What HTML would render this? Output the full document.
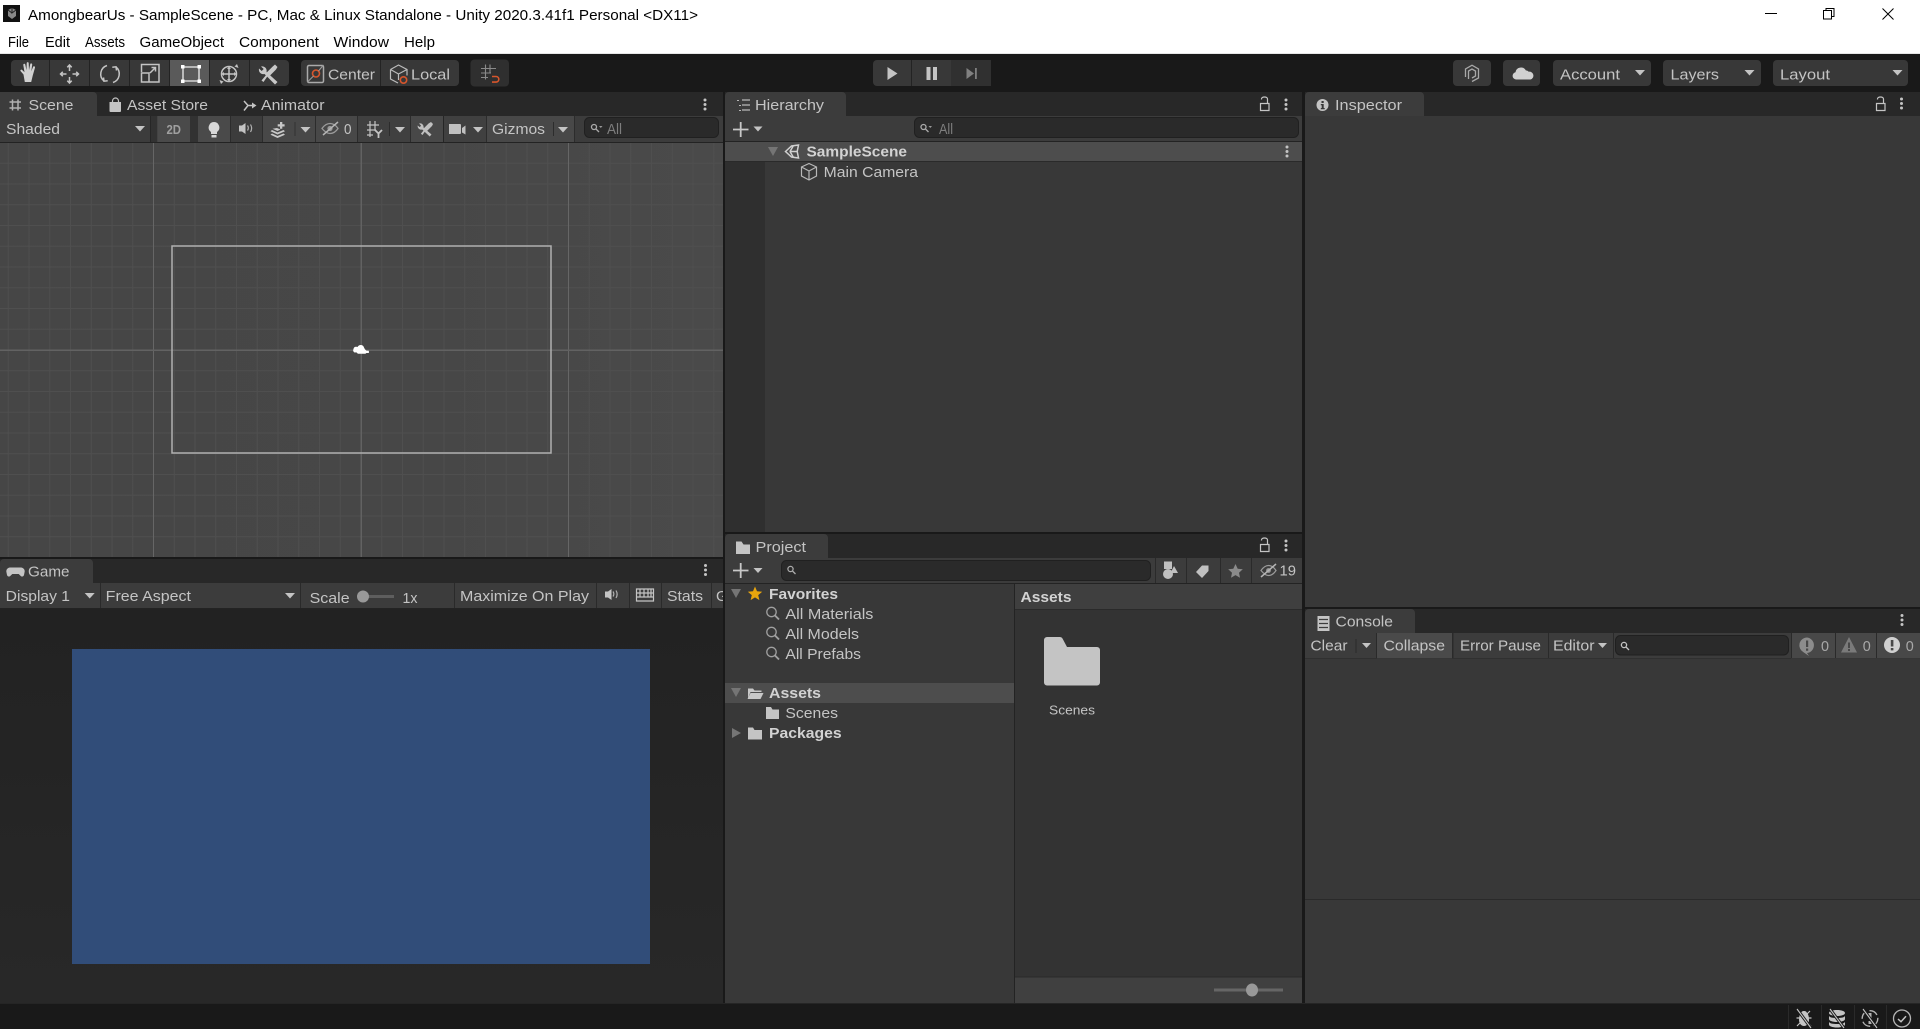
<!DOCTYPE html>
<html><head><meta charset="utf-8"><title>Unity</title>
<style>
html,body{margin:0;padding:0;width:1920px;height:1029px;overflow:hidden;background:#191919}
svg{display:block;position:absolute;left:0;top:0}
text{font-family:"Liberation Sans",sans-serif;font-size:15px;fill:#c4c4c4}
.k{fill:#000;font-size:15px}
.b{font-weight:bold;fill:#d2d2d2}
.d{fill:#7e7e7e}
.i{fill:#c4c4c4}
.s{fill:none;stroke:#c4c4c4;stroke-width:1.5}
.o{fill:none;stroke:#d8562c;stroke-width:1.6}
</style></head><body>
<svg width="1920" height="1029" viewBox="0 0 1920 1029" xmlns="http://www.w3.org/2000/svg">
<defs>
<pattern id="gx" x="153" y="0" width="20.75" height="10" patternUnits="userSpaceOnUse"><rect x="0" y="0" width="1" height="10" fill="#4f4f4f"/></pattern>
<pattern id="gy" x="0" y="142" width="10" height="20.75" patternUnits="userSpaceOnUse"><rect x="0" y="0" width="10" height="1" fill="#4f4f4f"/></pattern>
<linearGradient id="sg" x1="0" x2="1" y1="0" y2="0"><stop offset="0" stop-color="#464646"/><stop offset=".6" stop-color="#474747"/><stop offset="1" stop-color="#4a4a4a"/></linearGradient>
<linearGradient id="gg" x1="0" x2="0" y1="0" y2="1"><stop offset="0" stop-color="#222"/><stop offset="1" stop-color="#282828"/></linearGradient>
</defs>

<!-- title + menu -->
<rect width="1920" height="53" fill="#fff"/><rect y="53" width="1920" height="1" fill="#e6e6e6"/>
<rect x="3" y="5" width="17" height="17" fill="#111"/><path d="M8 10l4-2 4 2v6l-4 3-4-3z" fill="#888"/><path d="M12 8v5l4-3M12 13l-4-3" stroke="#222" fill="none"/>
<text class="k" x="28" y="20" textLength="670" lengthAdjust="spacingAndGlyphs">AmongbearUs - SampleScene - PC, Mac &amp; Linux Standalone - Unity 2020.3.41f1 Personal &lt;DX11&gt;</text>
<text class="k" x="8" y="47" textLength="21" lengthAdjust="spacingAndGlyphs">File</text>
<text class="k" x="45" y="47" textLength="25" lengthAdjust="spacingAndGlyphs">Edit</text>
<text class="k" x="85" y="47" textLength="40" lengthAdjust="spacingAndGlyphs">Assets</text>
<text class="k" x="139.5" y="47" textLength="84.5" lengthAdjust="spacingAndGlyphs">GameObject</text>
<text class="k" x="239" y="47" textLength="80" lengthAdjust="spacingAndGlyphs">Component</text>
<text class="k" x="333.5" y="47" textLength="55.5" lengthAdjust="spacingAndGlyphs">Window</text>
<text class="k" x="404" y="47" textLength="31" lengthAdjust="spacingAndGlyphs">Help</text>
<path d="M1765 13.500h12" stroke="#000" stroke-width="1" fill="none"/>
<path d="M1823.500 10.500h8v8.500h-8zM1826 10.500v-2h8v8h-2.500" stroke="#000" stroke-width="1" fill="none"/>
<path d="M1882.500 8.500l11 11M1893.500 8.500l-11 11" stroke="#000" stroke-width="1" fill="none"/>

<!-- main toolbar -->
<rect y="54" width="1920" height="38" fill="#191919"/>
<rect x="11" y="60" width="278" height="26" rx="4" fill="#383838"/>
<rect x="169" y="60" width="40" height="26" fill="#5a5a5a"/>
<rect x="49" y="60" width="1" height="26" fill="#232323"/><rect x="89" y="60" width="1" height="26" fill="#232323"/><rect x="129" y="60" width="1" height="26" fill="#232323"/><rect x="169" y="60" width="1" height="26" fill="#232323"/><rect x="209" y="60" width="1" height="26" fill="#232323"/><rect x="249" y="60" width="1" height="26" fill="#232323"/>
<!-- hand -->
<path fill="#d0d0d0" d="M23.500 74.500l-2.800-3.200c-.9-1 .5-2.200 1.500-1.300l2.300 2.300-1.200-7.300c-.2-1.400 1.700-1.800 2-.4l1.200 5.600.2-7c0-1.500 2-1.500 2 0l.3 7 1.200-6c.3-1.400 2.200-1 2 .4l-.9 6.600 1.800-4.300c.5-1.300 2.300-.6 1.900.7l-2.300 8.200-1.500 6.200h-6.400z"/>
<!-- move -->
<path class="s" d="M60.500 74h6M72.500 74h6M69.500 65v6M69.500 77v6M67.300 67.300l2.200-2.300 2.200 2.300M67.300 80.700l2.200 2.300 2.200-2.300M62.800 71.800l-2.300 2.200 2.300 2.200M76.200 71.800l2.300 2.200-2.300 2.200" stroke-width="1.200"/>
<!-- rotate -->
<path class="s" d="M107 65.500a9 9 0 0 0-3 15.500M103.500 77.500l.5 3.700 3.700-.4M113 82.500a9 9 0 0 0 3-15.500M116.500 70.500l-.5-3.700-3.700.4" stroke-width="1.300"/>
<!-- scale -->
<path class="s" d="M141.500 72v-7.500h17.500v17.500h-10.500M141.500 73h7.500v9h-7.500zM150 73l5.500-5.500M151.500 67.500h4v4" stroke-width="1.300"/>
<!-- rect -->
<path fill="none" stroke="#eee" stroke-width="1.300" d="M183 67h16v14h-16z"/><path fill="#fff" d="M181 65h3.500v3.500H181zM197.500 65h3.500v3.500h-3.500zM181 79.500h3.500V83H181zM197.500 79.500h3.500V83h-3.500z"/>
<!-- transform -->
<circle cx="229" cy="74" r="7.500" class="s" stroke-width="1.200"/><path class="s" stroke-width="1" d="M224 74h10M229 69v10"/><path class="i" d="M229 66.500l2 2.500h-4zM229 81.500l2-2.500h-4zM221.500 74l2.500-2v4zM236.500 74l-2.500-2v4zM237 64l1.500 4-4-1.500zM221 84l-1.500-4 4 1.500z"/>
<!-- tools -->
<path fill="#c8c8c8" d="M261 66.500a4.500 4.500 0 0 1 5.500 5.500l11 10-2.500 2.500-10.500-10.500a4.500 4.500 0 0 1-5.500-5.500l2.700 2.500 2-2z"/><path fill="#c8c8c8" d="M275 64.500l2.500 2.500-1.500 2.500-7 7-1-1-4.500 6.500-2-1.500 5-6-.8-1 7-7z"/>
<!-- center/local -->
<rect x="301" y="60" width="158" height="26" rx="4" fill="#383838"/><rect x="380" y="60" width="1" height="26" fill="#232323"/>
<rect x="307.500" y="65.500" width="16" height="17" rx="1.500" class="s" stroke-width="1.200" style="stroke:#aaa"/><circle cx="316" cy="73.500" r="3.500" class="o"/><path d="M307.500 82l6-6M318.500 71l5-6" stroke="#999" stroke-width="1.100"/>
<text x="328" y="79.500" textLength="47" lengthAdjust="spacingAndGlyphs">Center</text>
<path fill="none" stroke="#bbb" stroke-width="1.200" d="M390.500 69.500l8-4.500 8.500 4.500v6M390.500 69.500v9.500l7.500 4M390.500 69.500l8 4.500 8.500-4.500M398.500 74v6"/><circle cx="403.500" cy="80" r="3.200" class="o"/>
<text x="411" y="79.500" textLength="39" lengthAdjust="spacingAndGlyphs">Local</text>
<!-- snap -->
<rect x="470.500" y="59.500" width="38.500" height="27" rx="4" fill="#2f2f2f"/>
<path stroke="#8a8a8a" stroke-width="1.100" fill="none" d="M481 68.500h15M481 73h10M481 77.500h7M485.500 64.500v15M490 64.500v8"/>
<path class="o" stroke-width="2" d="M492 76.500h4a2.800 2.800 0 0 1 0 5.600h-4" fill="none"/>
<!-- play -->
<rect x="873" y="60" width="118" height="26" rx="4" fill="#383838"/><rect x="911" y="60" width="1" height="26" fill="#232323"/><rect x="951" y="60" width="40" height="26" fill="#303030"/>
<path fill="#c4c4c4" d="M887.500 67l10 6.500-10 6.500zM926.500 67h4v13h-4zM933 67h4v13h-4z"/>
<path fill="#808080" d="M966.500 68l7.500 5.500-7.500 5.500zM975 68h1.800v11H975z"/>
<!-- right toolbar -->
<rect x="1453" y="60" width="38" height="26" rx="4" fill="#383838"/>
<path fill="none" stroke="#a8a8a8" stroke-width="1.300" d="M1465.500 77v-8l6.500-3.800 6.500 3.800v9l-6.500 3.500M1468.500 79v-8l3.500-2 3.500 2v5l-3.500 2"/>
<rect x="1503" y="60" width="37" height="26" rx="4" fill="#383838"/>
<path fill="#d0d0d0" d="M1516 79.500a3.700 3.700 0 0 1-.5-7.300 5.500 5.500 0 0 1 10.300-1.800 4 4 0 0 1 3 1.300 4 4 0 0 1 1.700 7.800z"/>
<rect x="1553" y="60" width="98" height="26" rx="4" fill="#383838"/><rect x="1663" y="60" width="98" height="26" rx="4" fill="#383838"/><rect x="1773" y="60" width="135" height="26" rx="4" fill="#383838"/>
<text x="1560" y="79.500" textLength="60" lengthAdjust="spacingAndGlyphs">Account</text>
<text x="1670.500" y="79.500" textLength="48.500" lengthAdjust="spacingAndGlyphs">Layers</text>
<text x="1780" y="79.500" textLength="50" lengthAdjust="spacingAndGlyphs">Layout</text>
<path class="i" d="M1635 70h10l-5 5.500zM1744.500 70h10l-5 5.500zM1892.500 70h10l-5 5.500z"/>

<!-- Scene panel -->
<rect y="92" width="723" height="24" fill="#282828"/>
<path d="M0 116V92h93a4 4 0 0 1 4 4v20z" fill="#3c3c3c"/>
<path class="s" stroke-width="1.200" style="stroke:#b0b0b0" d="M9.500 102h11.500M9.500 108h11.500M12.500 99.500v11M18 99.500v11"/>
<text x="28.500" y="110" textLength="45" lengthAdjust="spacingAndGlyphs">Scene</text>
<path class="i" d="M109.500 102h11.500v9a1 1 0 0 1-1 1h-9.500a1 1 0 0 1-1-1z"/><path fill="none" stroke="#c4c4c4" stroke-width="1.200" d="M112.500 102v-1a3 3 0 0 1 6 0v1"/>
<text x="127" y="110" textLength="81" lengthAdjust="spacingAndGlyphs">Asset Store</text>
<path class="s" d="M244 101l4 4.500h7M244 110.500l4-5" stroke-width="1.400"/><path class="i" d="M252 102.500l4.500 3-4.500 3z"/>
<text x="261" y="110" textLength="63.500" lengthAdjust="spacingAndGlyphs">Animator</text>
<circle cx="705" cy="100" r="1.500" fill="#c4c4c4"/><circle cx="705" cy="104.500" r="1.500" fill="#c4c4c4"/><circle cx="705" cy="109" r="1.500" fill="#c4c4c4"/>

<rect y="116" width="723" height="26" fill="#3c3c3c"/>
<rect y="142" width="723" height="1" fill="#232323"/>
<rect x="150" y="116" width="7" height="26" fill="#323232"/><rect x="150" y="116" width="1" height="26" fill="#262626"/>
<rect x="157.500" y="116" width="32.500" height="26" fill="#4a4a4a"/><rect x="190" y="116" width="8" height="26" fill="#323232"/>
<rect x="198" y="116" width="32" height="26" fill="#4a4a4a"/><rect x="230" y="116" width="1" height="26" fill="#2c2c2c"/><rect x="262" y="116" width="1" height="26" fill="#2c2c2c"/>
<rect x="263" y="116" width="52" height="26" fill="#484848"/><rect x="315" y="116" width="1" height="26" fill="#2c2c2c"/>
<rect x="316" y="116" width="41" height="26" fill="#484848"/><rect x="357" y="116" width="1" height="26" fill="#2c2c2c"/>
<rect x="358" y="116" width="52" height="26" fill="#404040"/><rect x="410" y="116" width="1" height="26" fill="#2c2c2c"/>
<rect x="411" y="116" width="32" height="26" fill="#484848"/><rect x="443" y="116" width="1" height="26" fill="#262626"/>
<rect x="444" y="116" width="42" height="26" fill="#404040"/><rect x="486" y="116" width="1" height="26" fill="#2c2c2c"/>
<rect x="487" y="116" width="87" height="26" fill="#484848"/><rect x="574" y="116" width="1" height="26" fill="#2c2c2c"/>
<text x="6" y="134" textLength="54" lengthAdjust="spacingAndGlyphs">Shaded</text>
<path class="i" d="M135 126h10l-5 5.500z"/>
<text x="166.500" y="134" textLength="14.500" lengthAdjust="spacingAndGlyphs" font-weight="bold" style="fill:#a0a0a0;font-size:13px">2D</text>
<path fill="#d8d8d8" d="M214 122a5.500 5.500 0 0 1 3 10v2h-6v-2a5.500 5.500 0 0 1 3-10zM211.500 135h5v2.500h-5z"/>
<path fill="#c4c4c4" d="M239 125.500h3l3.500-2.500v11l-3.500-2.500h-3z"/><path fill="none" stroke="#b0b0b0" stroke-width="1.200" d="M247.500 125.500c1 1.500 1 3.500 0 5M250.500 124.500c1.500 2.500 1.500 5 0 7.500"/>
<path fill="#c8c8c8" d="M272 130l5.500 2.500 6-2.500 1.500 1.200-7.500 3.300-7-3.300zM272 133.500l5.500 2.500 6-2.500 1.500 1.200-7.500 3.300-7-3.300zM280 122h2.300v2.200h2.300v2.300h-2.300v2.200H280v-2.200h-2.300v-2.300h2.300zM277 128l3.500 1.500-3 1.500-5-2.300z"/>
<rect x="294.500" y="122" width="1" height="14" fill="#323232"/>
<path class="i" d="M300.500 127h10l-5 5.500z"/>
<path fill="none" stroke="#9a9a9a" stroke-width="1.300" d="M322 128.500c2.500-3.500 5-5 8-5s6 2 8 5c-2 3-5 5-8 5s-5.500-2-8-5z"/><circle cx="330" cy="128.500" r="2.600" fill="#9a9a9a"/><path stroke="#b4b4b4" stroke-width="1.500" d="M323 135l15-13"/>
<text x="344" y="134" textLength="7.500" lengthAdjust="spacingAndGlyphs">0</text>
<path fill="none" stroke="#c4c4c4" stroke-width="1.200" d="M367 125h12M367 130h9M367 135h6M370 121v16M375 121v9"/>
<path fill="none" stroke="#c4c4c4" stroke-width="1.800" d="M375 130l3.500 3.500 3.500-3.500M378.500 133.500v4.500"/>
<rect x="389" y="122" width="1" height="14" fill="#2c2c2c"/>
<path class="i" d="M395 127h10l-5 5.500z"/>
<path fill="#c0c0c0" d="M419 123.500a3.500 3.500 0 0 1 4.500 4l8 7-1.800 2-7.500-7a3.500 3.500 0 0 1-4.500-4l2 1.600 1.400-1.400zM431 122l2 2-1 2-5 5-1-1-3.500 5-1.600-1.200 3.600-4.600-.8-.8 5-5z"/>
<path fill="#c0c0c0" d="M450 123h11a1 1 0 0 1 1 1v8a1 1 0 0 1-1 1h-11zM463 127l3.500-2.500v9L463 131.500z" transform="translate(-1,1)"/>
<path class="i" d="M473 127h10l-5 5.500z"/>
<text x="492" y="134" textLength="53" lengthAdjust="spacingAndGlyphs">Gizmos</text>
<rect x="553" y="122" width="1" height="14" fill="#2c2c2c"/>
<path class="i" d="M558 127h10l-5 5.500z"/>
<rect x="584.500" y="117.500" width="134" height="20" rx="5" fill="#2a2a2a" stroke="#202020"/>
<circle cx="594" cy="127" r="2.500" fill="none" stroke="#aaa" stroke-width="1.300"/><path stroke="#aaa" stroke-width="1.300" d="M596 129l3 3"/><path fill="#999" d="M599 126h3.500l-1.700 2z"/>
<text x="607" y="134" textLength="15" lengthAdjust="spacingAndGlyphs" class="d">All</text>

<!-- scene view -->
<rect y="143" width="723" height="414" fill="url(#sg)"/>
<rect y="143" width="723" height="414" fill="url(#gx)"/>
<rect y="143" width="723" height="414" fill="url(#gy)"/>
<rect x="153" y="143" width="1" height="414" fill="#666"/><rect x="568" y="143" width="1" height="414" fill="#666"/>
<rect x="360.500" y="143" width="1.500" height="414" fill="#626262"/>
<rect y="349.500" width="723" height="1.500" fill="#626262"/>
<rect x="172" y="246" width="379" height="207" fill="none" stroke="#b0b0b0" stroke-width="1.500"/>
<path fill="#fff" d="M353.500 349a2.600 2.600 0 0 1 2.500-2.300l1.700.2a3.400 3.400 0 0 1 6.300 0.600l.9 1.800 1.500 1.300 2.500.2v2.200h-2.500l-1 .8h-7.500l-1.500-1.400-1.900.1a2.700 2.700 0 0 1-1-3.500z"/>

<!-- Game panel -->
<rect y="557" width="723" height="2" fill="#191919"/>
<rect y="559" width="723" height="24" fill="#282828"/>
<path d="M0 583V563a4 4 0 0 1 4-4h85a4 4 0 0 1 4 4v20z" fill="#3c3c3c"/>
<path class="i" d="M10 566.500h11a3.800 3.800 0 0 1 3.500 5l-.5 2.500c-.4 1.800-2.500 2-3.500.8l-1.800-1.800h-6.400l-1.800 1.800c-1 1.200-3.100 1-3.500-.8l-.5-2.500a3.800 3.800 0 0 1 3.500-5z" transform="translate(0,1)"/>
<text x="28" y="576.500" textLength="41.500" lengthAdjust="spacingAndGlyphs">Game</text>
<circle cx="705.500" cy="565.500" r="1.500" fill="#c4c4c4"/><circle cx="705.500" cy="570" r="1.500" fill="#c4c4c4"/><circle cx="705.500" cy="574.500" r="1.500" fill="#c4c4c4"/>
<rect y="583" width="723" height="25" fill="#3c3c3c"/>
<rect y="608" width="723" height="1" fill="#232323"/>
<rect x="100" y="583" width="1" height="25" fill="#2a2a2a"/><rect x="300" y="583" width="1" height="25" fill="#2a2a2a"/><rect x="454" y="583" width="1" height="25" fill="#2a2a2a"/><rect x="596" y="583" width="1" height="25" fill="#2a2a2a"/><rect x="629" y="583" width="1" height="25" fill="#2a2a2a"/><rect x="661" y="583" width="1" height="25" fill="#2a2a2a"/><rect x="711" y="583" width="1" height="25" fill="#2a2a2a"/>
<text x="5.700" y="601" textLength="64.300" lengthAdjust="spacingAndGlyphs">Display 1</text>
<path class="i" d="M84.700 593h10l-5 5.500z"/>
<text x="105.700" y="601" textLength="85.300" lengthAdjust="spacingAndGlyphs">Free Aspect</text>
<path class="i" d="M285 593h10l-5 5.500z"/>
<text x="309.600" y="603" textLength="40" lengthAdjust="spacingAndGlyphs">Scale</text>
<rect x="365" y="595" width="29" height="3" fill="#5e5e5e"/><circle cx="363" cy="596.500" r="6" fill="#999"/>
<text x="402.500" y="603" textLength="15" lengthAdjust="spacingAndGlyphs">1x</text>
<text x="460" y="601" textLength="129" lengthAdjust="spacingAndGlyphs">Maximize On Play</text>
<path fill="#c4c4c4" d="M605 591.500h3l3.500-2.500v11l-3.500-2.500h-3z"/><path fill="none" stroke="#b0b0b0" stroke-width="1.200" d="M613 591.500c1 1.500 1 3.500 0 5M616 590.500c1.500 2.500 1.500 5 0 7.500"/>
<path fill="none" stroke="#c4c4c4" stroke-width="1.200" d="M636.500 589h17v12h-17zM636.500 593h17M636.500 597h17M640 589v8M644 589v8M648 589v8M651 589v8"/>
<text x="667" y="601" textLength="36" lengthAdjust="spacingAndGlyphs">Stats</text>
<svg x="711" y="583" width="12" height="25"><text x="5" y="18">G</text></svg>
<!-- game view -->
<rect y="609" width="723" height="394" fill="url(#gg)"/>
<rect x="72" y="649" width="578" height="315" fill="#314d79"/>

<!-- Hierarchy -->
<rect x="723" y="92" width="2" height="911" fill="#191919"/>
<rect x="725" y="92" width="577" height="24" fill="#282828"/>
<path d="M725 116V96a4 4 0 0 1 4-4h113a4 4 0 0 1 4 4v20z" fill="#3c3c3c"/>
<path fill="none" stroke="#b8b8b8" stroke-width="1.200" d="M742 100h8M742 105h8M742 110h8"/><path fill="#b8b8b8" d="M737 100h2v1h-2zM739 105h2v1h-2zM739 110h2v1h-2z"/>
<text x="755" y="110" textLength="69" lengthAdjust="spacingAndGlyphs">Hierarchy</text>
<path fill="none" stroke="#c4c4c4" stroke-width="1.200" d="M1260.500 103.500v7h8.500v-7zM1261.500 99.500v-.5c0-1 1-2 3-2s3 1 3 2v4.500"/>
<circle cx="1286" cy="100" r="1.500" fill="#c4c4c4"/><circle cx="1286" cy="104.500" r="1.500" fill="#c4c4c4"/><circle cx="1286" cy="109" r="1.500" fill="#c4c4c4"/>
<rect x="725" y="116" width="577" height="26" fill="#3c3c3c"/><rect x="725" y="141" width="577" height="1" fill="#232323"/>
<path stroke="#c8c8c8" stroke-width="1.800" d="M733 129.500h15.500M740.700 122v15" fill="none"/><path class="i" d="M753.500 126.500h9l-4.500 5z"/>
<rect x="914.500" y="117.500" width="384" height="20" rx="5" fill="#2a2a2a" stroke="#202020"/>
<circle cx="923.500" cy="127" r="2.500" fill="none" stroke="#aaa" stroke-width="1.300"/><path stroke="#aaa" stroke-width="1.300" d="M925.500 129l3 3"/><path fill="#999" d="M928.500 126h3.500l-1.700 2z"/>
<text x="939" y="134" textLength="14" lengthAdjust="spacingAndGlyphs" class="d">All</text>
<rect x="725" y="142" width="40" height="390" fill="#2f2f2f"/><rect x="765" y="142" width="537" height="390" fill="#383838"/>
<rect x="725" y="142" width="577" height="19" fill="#4d4d4d"/><rect x="725" y="161" width="577" height="1" fill="#2a2a2a"/>
<path fill="#757575" d="M768 147h10l-5 9z"/>
<path fill="none" stroke="#d0d0d0" stroke-width="1.500" d="M785.500 151.500l6-5.500 7-1-1.300 6.500 1.300 6.500-7-1zM789.500 151.500h8M790 151.500l3.500-6M790 151.500l3.500 6"/>
<text class="b" x="806.500" y="156.500" textLength="100.500" lengthAdjust="spacingAndGlyphs">SampleScene</text>
<circle cx="1287" cy="147" r="1.500" fill="#c4c4c4"/><circle cx="1287" cy="151.500" r="1.500" fill="#c4c4c4"/><circle cx="1287" cy="156" r="1.500" fill="#c4c4c4"/>
<path fill="none" stroke="#b8b8b8" stroke-width="1.200" d="M816.500 167l-7.500-3.500-7.500 3.500v9l7.500 4 7.500-4zM801.500 167l7.500 4 7.500-4M809 171v9"/>
<text x="823.700" y="177" textLength="94.300" lengthAdjust="spacingAndGlyphs">Main Camera</text>

<!-- Project -->
<rect x="725" y="532" width="577" height="2" fill="#191919"/>
<rect x="725" y="534" width="577" height="24" fill="#282828"/>
<path d="M725 558V538a4 4 0 0 1 4-4h95a4 4 0 0 1 4 4v20z" fill="#3c3c3c"/>
<path class="i" d="M736 541.500h5.500l2 3h6.500v9.500h-14z"/>
<text x="755.500" y="552" textLength="50.500" lengthAdjust="spacingAndGlyphs">Project</text>
<path fill="none" stroke="#c4c4c4" stroke-width="1.200" d="M1260.500 544.500v7h8.500v-7zM1261.500 540.500v-.5c0-1 1-2 3-2s3 1 3 2v4.500"/>
<circle cx="1286" cy="541" r="1.500" fill="#c4c4c4"/><circle cx="1286" cy="545.500" r="1.500" fill="#c4c4c4"/><circle cx="1286" cy="550" r="1.500" fill="#c4c4c4"/>
<rect x="725" y="558" width="577" height="25" fill="#3c3c3c"/><rect x="725" y="583" width="577" height="1" fill="#232323"/>
<path stroke="#c8c8c8" stroke-width="1.800" d="M733 570.500h15.500M740.700 563v15" fill="none"/><path class="i" d="M753.500 568h9l-4.500 5z"/>
<rect x="781.500" y="560.500" width="369" height="20" rx="5" fill="#2a2a2a" stroke="#202020"/>
<circle cx="790.500" cy="569" r="2.600" fill="none" stroke="#aaa" stroke-width="1.300"/><path stroke="#aaa" stroke-width="1.300" d="M792.500 571l3 3"/>
<rect x="1155" y="558" width="1" height="25" fill="#2a2a2a"/><rect x="1186" y="558" width="1" height="25" fill="#2a2a2a"/><rect x="1220" y="558" width="1" height="25" fill="#2a2a2a"/><rect x="1251" y="558" width="1" height="25" fill="#2a2a2a"/>
<path fill="#c0c0c0" d="M1164 561.500h8v7.500h-8z"/><circle cx="1168" cy="574" r="5" fill="#c0c0c0"/><path fill="#c0c0c0" d="M1174 566l4 7h-7.500z"/>
<path fill="#c0c0c0" d="M1196 572l6-6.500h6.500v5.500l-6.500 7z"/>
<path fill="#8a8a8a" d="M1235.500 564l2.200 4.700 5.100.6-3.800 3.400 1 5-4.500-2.600-4.500 2.600 1-5-3.800-3.400 5.100-.6z"/>
<path fill="none" stroke="#9a9a9a" stroke-width="1.200" d="M1261 570.500c2.500-3.500 5-5 7.500-5s5.500 2 7.500 5c-2 3-5 5-7.500 5s-5-2-7.500-5z"/><circle cx="1268.500" cy="570.500" r="2.400" fill="#9a9a9a"/><path stroke="#b4b4b4" stroke-width="1.500" d="M1261 577l15-13"/>
<text x="1279.500" y="575.500" textLength="16.500" lengthAdjust="spacingAndGlyphs">19</text>

<rect x="725" y="584" width="289" height="419" fill="#383838"/><rect x="1014" y="584" width="1" height="419" fill="#232323"/><rect x="1015" y="584" width="287" height="419" fill="#333333"/>
<rect x="1015" y="584" width="287" height="25" fill="#3f3f3f"/><rect x="1015" y="609" width="287" height="1" fill="#2a2a2a"/>
<text class="b" x="1020.500" y="602" textLength="51" lengthAdjust="spacingAndGlyphs">Assets</text>
<path fill="#757575" d="M731 589h10l-5 9z"/>
<path fill="#e9a60d" d="M755 586.500l2 4.700 5.200.5-4 3.400 1.200 5-4.400-2.700-4.400 2.700 1.200-5-4-3.400 5.200-.5z"/>
<text class="b" x="769" y="599" textLength="69" lengthAdjust="spacingAndGlyphs">Favorites</text>
<circle cx="771.500" cy="612" r="4.700" fill="none" stroke="#a0a0a0" stroke-width="1.300"/><path stroke="#a0a0a0" stroke-width="1.900" d="M775 615.500l4 4"/>
<text x="785.400" y="619" textLength="88" lengthAdjust="spacingAndGlyphs">All Materials</text>
<circle cx="771.500" cy="632" r="4.700" fill="none" stroke="#a0a0a0" stroke-width="1.300"/><path stroke="#a0a0a0" stroke-width="1.900" d="M775 635.500l4 4"/>
<text x="785.400" y="639" textLength="73.600" lengthAdjust="spacingAndGlyphs">All Models</text>
<circle cx="771.500" cy="652" r="4.700" fill="none" stroke="#a0a0a0" stroke-width="1.300"/><path stroke="#a0a0a0" stroke-width="1.900" d="M775 655.500l4 4"/>
<text x="785.400" y="659" textLength="75.600" lengthAdjust="spacingAndGlyphs">All Prefabs</text>
<rect x="725" y="683" width="289" height="20" fill="#4d4d4d"/>
<path fill="#757575" d="M731 688h10l-5 9z"/>
<path fill="#c8c8c8" d="M748 698v-9.500h5l1.500 2h7v1.500h-11zM747.500 699l3-6h13l-3 6z" />
<text class="b" x="769" y="698" textLength="52" lengthAdjust="spacingAndGlyphs">Assets</text>
<path class="i" d="M766 707h5l1.500 2.500h6.500v9.500H766z"/>
<text x="785.400" y="718" textLength="52.600" lengthAdjust="spacingAndGlyphs">Scenes</text>
<path fill="#757575" d="M732 728v10l9-5z"/>
<path class="i" d="M748 727.500h5l1.500 2.500h7.500v9.500h-14z"/>
<text class="b" x="769" y="738" textLength="72.700" lengthAdjust="spacingAndGlyphs">Packages</text>
<path fill="#c4c4c4" d="M1044 640a3 3 0 0 1 3-3h13a3 3 0 0 1 2.500 1.500l4.500 8.500h30a3 3 0 0 1 3 3v32.500a3 3 0 0 1-3 3h-50a3 3 0 0 1-3-3z"/>
<text x="1049" y="714.500" textLength="46" lengthAdjust="spacingAndGlyphs" style="font-size:12.500px">Scenes</text>
<rect x="1015" y="977" width="287" height="26" fill="#404040"/><rect x="1015" y="976.500" width="287" height="1" fill="#2a2a2a"/>
<rect x="1214" y="988.500" width="69" height="3" fill="#666"/><ellipse cx="1252" cy="990" rx="6" ry="6.500" fill="#999"/>

<!-- Inspector -->
<rect x="1302" y="92" width="3" height="911" fill="#191919"/>
<rect x="1305" y="92" width="615" height="24" fill="#282828"/>
<path d="M1305 116V96a4 4 0 0 1 4-4h111a4 4 0 0 1 4 4v20z" fill="#3c3c3c"/>
<rect x="1305" y="116" width="615" height="491" fill="#383838"/>
<circle cx="1322.500" cy="105" r="6" fill="#c4c4c4"/><path fill="#383838" d="M1321.500 101h2.200v2h-2.200zM1320.800 104h2.900v4h1v1.200h-3.900V108h.9v-2.800h-.9z"/>
<text x="1335" y="110" textLength="67" lengthAdjust="spacingAndGlyphs">Inspector</text>
<path fill="none" stroke="#c4c4c4" stroke-width="1.200" d="M1876.500 103.500v7h8.500v-7zM1877.500 99.500v-.5c0-1 1-2 3-2s3 1 3 2v4.500"/>
<circle cx="1901.500" cy="99" r="1.500" fill="#c4c4c4"/><circle cx="1901.500" cy="103.500" r="1.500" fill="#c4c4c4"/><circle cx="1901.500" cy="108" r="1.500" fill="#c4c4c4"/>

<!-- Console -->
<rect x="1305" y="607" width="615" height="2" fill="#191919"/>
<rect x="1305" y="609" width="615" height="24" fill="#282828"/>
<path d="M1305 633V613a4 4 0 0 1 4-4h102a4 4 0 0 1 4 4v20z" fill="#3c3c3c"/>
<path fill="#c4c4c4" d="M1317.500 616h12v15h-12z"/><path stroke="#3c3c3c" stroke-width="1.200" d="M1319 619.500h9M1319 623.500h9M1319 627.500h9"/>
<text x="1335.500" y="626.500" textLength="57.500" lengthAdjust="spacingAndGlyphs">Console</text>
<circle cx="1902" cy="615.500" r="1.500" fill="#c4c4c4"/><circle cx="1902" cy="620" r="1.500" fill="#c4c4c4"/><circle cx="1902" cy="624.500" r="1.500" fill="#c4c4c4"/>
<rect x="1305" y="633" width="615" height="26" fill="#3c3c3c"/><rect x="1305" y="658.500" width="615" height="1" fill="#232323"/>
<rect x="1377" y="633" width="75" height="25.500" fill="#4a4a4a"/><rect x="1376" y="633" width="1" height="25" fill="#2a2a2a"/><rect x="1452" y="633" width="1.500" height="25" fill="#2a2a2a"/><rect x="1548" y="633" width="1" height="25" fill="#2a2a2a"/><rect x="1613" y="633" width="1" height="25" fill="#2a2a2a"/>
<rect x="1791" y="633" width="129" height="25.500" fill="#484848"/><rect x="1791" y="633" width="1" height="25" fill="#2a2a2a"/><rect x="1835" y="633" width="1" height="25" fill="#2a2a2a"/><rect x="1876" y="633" width="1" height="25" fill="#2a2a2a"/>
<text x="1310.500" y="650.500" textLength="37" lengthAdjust="spacingAndGlyphs">Clear</text>
<rect x="1355.500" y="639" width="1" height="14" fill="#2a2a2a"/>
<path class="i" d="M1362 643h9l-4.500 5z"/>
<text x="1383.500" y="650.500" textLength="61.500" lengthAdjust="spacingAndGlyphs">Collapse</text>
<text x="1460" y="650.500" textLength="81" lengthAdjust="spacingAndGlyphs">Error Pause</text>
<text x="1553" y="650.500" textLength="41.500" lengthAdjust="spacingAndGlyphs">Editor</text>
<path class="i" d="M1598 643h9l-4.500 5z"/>
<rect x="1615.500" y="635.500" width="173" height="19.500" rx="5" fill="#2a2a2a" stroke="#202020"/>
<circle cx="1624" cy="645" r="2.600" fill="none" stroke="#c4c4c4" stroke-width="1.300"/><path stroke="#c4c4c4" stroke-width="1.300" d="M1626 647l3 3"/>
<path fill="#8c8c8c" d="M1807 637.500a7.800 7.800 0 0 1 0 15.500l2 3-5.500-3.800a7.800 7.800 0 0 1 3.500-14.700z"/><path fill="#484848" d="M1806 640.500h2.200v6.500H1806zM1806 648.500h2.200v2.200H1806z"/>
<text x="1821" y="651" textLength="8" lengthAdjust="spacingAndGlyphs" style="fill:#a8a8a8">0</text>
<path fill="#7a7a7a" d="M1849 637l8 15.500h-16z"/><path fill="#484848" d="M1848 642.500h2v5.500h-2zM1848 649h2v2h-2z"/>
<text x="1862.700" y="651" textLength="8" lengthAdjust="spacingAndGlyphs" style="fill:#a8a8a8">0</text>
<circle cx="1892" cy="645" r="8" fill="#d0d0d0"/><path fill="#484848" d="M1890.800 640h2.600v6.500h-2.600zM1890.800 648h2.600v2.400h-2.600z"/>
<text x="1905.700" y="651" textLength="8" lengthAdjust="spacingAndGlyphs" style="fill:#a8a8a8">0</text>
<rect x="1305" y="659" width="615" height="344" fill="#383838"/>
<rect x="1305" y="899" width="615" height="1" fill="#2a2a2a"/>

<!-- Status bar -->
<rect y="1003" width="1920" height="26" fill="#191919"/>
<rect y="1003" width="1920" height="1" fill="#252525"/>
<rect x="1788" y="1005" width="1" height="24" fill="#2a2a2a"/><rect x="1821" y="1005" width="1" height="24" fill="#2a2a2a"/><rect x="1854" y="1005" width="1" height="24" fill="#2a2a2a"/><rect x="1886" y="1005" width="1" height="24" fill="#2a2a2a"/>
<path fill="#c4c4c4" d="M1804 1011a3 3 0 0 1 3 2c1.500 1.500 2 4 2 7 0 3-2 6-5 6s-5-3-5-6c0-3 .5-5.500 2-7a3 3 0 0 1 3-2z"/><path stroke="#c4c4c4" stroke-width="1.200" d="M1798 1011l3 3M1810 1011l-3 3M1796.500 1018h3M1811.500 1018h-3M1797 1026l3-3M1811 1026l-3-3"/><path stroke="#191919" stroke-width="3" d="M1797 1009l14 19"/><path stroke="#c4c4c4" stroke-width="1.100" d="M1797 1009l14 19"/>
<path fill="#c4c4c4" d="M1829 1013c0-1.800 3.500-3 8-3s8 1.200 8 3-3.500 3-8 3-8-1.200-8-3zM1829 1016c1 1.600 4 2 8 2s7-.4 8-2v3c0 1.800-3.500 3-8 3s-8-1.200-8-3zM1829 1022c1 1.600 4 2 8 2s7-.4 8-2v2.500c0 1.800-3.500 3-8 3s-8-1.200-8-3z"/><path stroke="#191919" stroke-width="3" d="M1830 1009l14 19"/><path stroke="#c4c4c4" stroke-width="1.100" d="M1830 1009l14 19"/>
<circle cx="1870" cy="1018.500" r="7.800" fill="none" stroke="#b4b4b4" stroke-width="1.400" stroke-dasharray="9 3"/><path fill="#b4b4b4" d="M1868.500 1013h3v6h-3zM1868.500 1021h3v3h-3z"/><path stroke="#191919" stroke-width="3" d="M1863 1009l14 19"/><path stroke="#c4c4c4" stroke-width="1.100" d="M1863 1009l14 19"/>
<circle cx="1902" cy="1018.500" r="8.500" fill="none" stroke="#b4b4b4" stroke-width="1.300"/><path fill="none" stroke="#c4c4c4" stroke-width="1.500" d="M1898 1019l3 2.700 5-5.500"/>
</svg>
</body></html>
